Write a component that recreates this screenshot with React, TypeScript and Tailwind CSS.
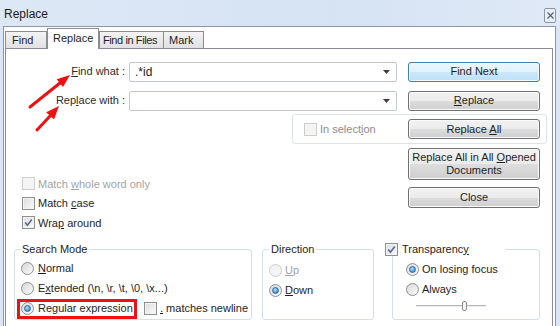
import type { ReactNode } from "react";

function Check({ checked = false, disabled = false }: { checked?: boolean; disabled?: boolean }) {
  return (
    <span
      className={`flex h-[13px] w-[13px] shrink-0 items-center justify-center border ${
        disabled
          ? "border-[#cdcdcd] bg-[#f4f4f4]"
          : "border-[#8e8f8f] bg-[linear-gradient(135deg,#dcdcdc,#fbfbfb)] shadow-[inset_0_0_0_1px_#f3f3f3]"
      }`}
    >
      {checked && (
        <svg width="9" height="9" viewBox="0 0 9 9">
          <path d="M1.2 4.6 L3.4 7.2 L7.8 1.4" fill="none" stroke="#56679a" strokeWidth="1.6" />
        </svg>
      )}
    </span>
  );
}

function Radio({ checked = false, disabled = false }: { checked?: boolean; disabled?: boolean }) {
  return (
    <span
      className={`flex h-[13px] w-[13px] shrink-0 items-center justify-center rounded-full border ${
        disabled
          ? "border-[#cdcdcd] bg-[#f4f4f4]"
          : "border-[#8e8f8f] bg-[linear-gradient(135deg,#d8d8d8,#fbfbfb)]"
      }`}
    >
      {checked && (
        <span className="h-[7px] w-[7px] rounded-full border border-[#2f6ca3] bg-[radial-gradient(circle_at_40%_35%,#b9e2fb,#4b9be0_60%,#2b73b8)]" />
      )}
    </span>
  );
}

function Btn({ children, focused = false, className = "" }: { children: ReactNode; focused?: boolean; className?: string }) {
  return (
    <div
      className={`flex w-[132px] shrink-0 items-center justify-center rounded-[3px] border text-center leading-[13px] ${
        focused
          ? "border-[#3c7fb1] bg-[linear-gradient(#eaf6fd_0%,#e0f2fc_50%,#cbe8fb_50%,#bde1f7_100%)] shadow-[inset_0_0_0_1px_#f4fbff]"
          : "border-[#707070] bg-[linear-gradient(#f2f2f2_0%,#ebebeb_50%,#dddddd_50%,#cfcfcf_100%)] shadow-[inset_0_0_0_1px_#fbfbfb]"
      } ${className}`}
    >
      {children}
    </div>
  );
}

function Combo({ value = "" }: { value?: string }) {
  return (
    <div className="ml-[4px] flex h-[20px] w-[268px] items-center justify-between rounded-[2px] border border-[#c3c8d0] bg-white pl-[5px] pr-[6px] text-[12px] text-[#1e1e1e]">
      <span>{value}</span>
      <svg width="7" height="4" viewBox="0 0 7 4">
        <path d="M0 0 H7 L3.5 4 Z" fill="#3d3d3d" />
      </svg>
    </div>
  );
}

export default function App() {
  return (
    <div className="relative h-[326px] w-[560px] overflow-hidden bg-[#dae6f5] font-['Liberation_Sans',Arial,sans-serif] text-[11px] text-[#1e1e1e]">
      {/* barra de título */}
      <div className="flex h-[26px] items-start justify-between bg-[linear-gradient(90deg,#dde8f6,#d6e3f3_60%,#dfe9f7)] pl-[4px] pr-[4px]">
        <span className="mt-[7px] text-[12px] leading-[14px] text-[#1b1b1b]">Replace</span>
        <div className="mt-[8px] flex h-[15px] w-[12px] items-center justify-center rounded-[2px] border border-[#8a95a5] bg-[#e8eff9]">
          <svg width="7" height="7" viewBox="0 0 7 7">
            <path d="M0.5 0.5 L6.5 6.5 M6.5 0.5 L0.5 6.5" stroke="#5b6470" strokeWidth="1.3" />
          </svg>
        </div>
      </div>

      {/* área do diálogo */}
      <div className="ml-[3px] mr-[4px] h-[300px] border-l border-r border-t border-[#8b96a6] bg-white">
        {/* abas */}
        <div className="flex h-[21px] items-end whitespace-nowrap pl-[1px]">
          <div className="flex h-[17px] w-[42px] items-center border border-b-0 border-[#898c95] bg-[linear-gradient(#f3f3f3,#e1e1e1)] pl-[6px]">Find</div>
          <div className="relative z-10 -mb-px flex h-[21px] w-[52px] items-center border border-b-0 border-[#898c95] bg-white pl-[5px] pb-[1px]">Replace</div>
          <div className="flex h-[17px] w-[65px] items-center overflow-hidden border border-b-0 border-[#898c95] bg-[linear-gradient(#f3f3f3,#e1e1e1)] pl-[3px] tracking-[-0.4px]">Find in Files</div>
          <div className="flex h-[17px] w-[40px] items-center border border-b-0 border-l-0 border-[#898c95] bg-[linear-gradient(#f3f3f3,#e1e1e1)] pl-[5px]">Mark</div>
        </div>

        {/* painel */}
        <div className="ml-[1px] mr-[2px] h-[300px] border border-[#898c95]">
          <div className="mt-[12px] flex h-[21px] items-center">
            <span className="w-[119px] text-right text-[#2b2b2b]">
              <u>F</u>ind what :
            </span>
            <Combo value=".*id" />
            <Btn focused className="ml-[11px] h-[20px]">Find Next</Btn>
          </div>
          <div className="mt-[8px] flex h-[21px] items-center">
            <span className="w-[119px] text-right text-[#2b2b2b]">
              Rep<u>l</u>ace with :
            </span>
            <Combo />
            <Btn className="ml-[11px] h-[20px]">
              <span>
                <u>R</u>eplace
              </span>
            </Btn>
          </div>

          <div className="ml-[286px] mt-[3px] flex h-[30px] w-[255px] items-center rounded-[3px] border border-[#dde3ea] pl-[11px]">
            <div className="flex w-[104px] items-center gap-[3px] text-[#8d8d8d]">
              <Check disabled />
              <span>
                In select<u>i</u>on
              </span>
            </div>
            <Btn className="h-[20px]">
              <span>
                Replace <u>A</u>ll
              </span>
            </Btn>
          </div>

          <div className="mt-[4px] flex">
            <div className="w-[402px] pl-[16px] pt-[26px]">
              <div className="flex h-[19.5px] items-center gap-[3px] text-[#a3a3a3]">
                <Check disabled />
                <span>
                  Match <u>w</u>hole word only
                </span>
              </div>
              <div className="flex h-[19.5px] items-center gap-[3px]">
                <Check />
                <span>
                  Match <u>c</u>ase
                </span>
              </div>
              <div className="flex h-[19.5px] items-center gap-[3px]">
                <Check checked />
                <span>
                  Wra<u>p</u> around
                </span>
              </div>
            </div>
            <div className="flex flex-col gap-[7px]">
              <Btn className="h-[32px]">
                <span>
                  Replace All in All <u>O</u>pened
                  <br />
                  Documents
                </span>
              </Btn>
              <Btn className="h-[21px]">Close</Btn>
            </div>
          </div>

          {/* grupos */}
          <div className="mt-[10px] flex items-stretch">
            <fieldset className="ml-[8px] w-[238px] rounded-[3px] border border-[#d5dfe5] pt-[3px]">
              <legend className="ml-[5px] px-[2px] leading-[13px]">Search Mode</legend>
              <div className="flex h-[20px] items-center gap-[4px] pl-[6px]">
                <Radio />
                <span>
                  <u>N</u>ormal
                </span>
              </div>
              <div className="flex h-[20px] items-center gap-[4px] pl-[6px]">
                <Radio />
                <span>
                  E<u>x</u>tended (\n, \r, \t, \0, \x...)
                </span>
              </div>
              <div className="flex h-[20px] items-center">
                <div className="ml-[2px] flex h-[20px] w-[120px] shrink-0 items-center gap-[4px] border-[3px] border-[#ee1111] pl-[1px]">
                  <Radio checked />
                  <span className="whitespace-nowrap">
                    Re<u>g</u>ular expression
                  </span>
                </div>
                <div className="ml-[7px] flex items-center gap-[3px]">
                  <Check />
                  <span className="whitespace-nowrap">
                    <u>.</u> matches newline
                  </span>
                </div>
              </div>
            </fieldset>

            <fieldset className="ml-[10px] w-[112px] rounded-[3px] border border-[#d5dfe5] pt-[5px]">
              <legend className="ml-[6px] px-[2px] leading-[13px]">Direction</legend>
              <div className="flex h-[20px] items-center gap-[3px] pl-[6px] text-[#a3a3a3]">
                <Radio disabled />
                <span>
                  <u>U</u>p
                </span>
              </div>
              <div className="flex h-[20px] items-center gap-[3px] pl-[6px]">
                <Radio checked />
                <span>
                  <u>D</u>own
                </span>
              </div>
            </fieldset>

            <fieldset className="ml-[18px] w-[148px] rounded-[3px] border border-[#d5dfe5] pt-[4px]">
              <legend className="-ml-[8px] flex w-[120px] items-center gap-[4px] leading-[13px]">
                <Check checked />
                <span>
                  Transparenc<u>y</u>
                </span>
              </legend>
              <div className="flex h-[20px] items-center gap-[3px] pl-[13px]">
                <Radio checked />
                <span>On losing focus</span>
              </div>
              <div className="flex h-[20px] items-center gap-[3px] pl-[13px]">
                <Radio />
                <span>Always</span>
              </div>
              <div className="flex h-[12px] items-center pl-[23px]">
                <svg width="70" height="12" viewBox="0 0 70 12">
                  <line x1="0" y1="5.5" x2="70" y2="5.5" stroke="#b4b4b4" />
                  <line x1="0" y1="6.5" x2="70" y2="6.5" stroke="#efefef" />
                  <rect x="46.5" y="1.5" width="4" height="9" rx="1.5" fill="#f4f4f4" stroke="#8e8f8f" />
                </svg>
              </div>
            </fieldset>
          </div>
        </div>
      </div>

      {/* setas de anotação */}
      <svg className="pointer-events-none absolute inset-0" width="560" height="326">
        <line x1="30" y1="107" x2="60" y2="83" stroke="#ee1111" strokeWidth="3" strokeLinecap="round" />
        <polygon points="70,75 63,87 56.7,79.2" fill="#ee1111" />
        <line x1="37" y1="130" x2="50.5" y2="115.5" stroke="#ee1111" strokeWidth="3" strokeLinecap="round" />
        <polygon points="59,106 54,119.5 46.2,112.3" fill="#ee1111" />
      </svg>
    </div>
  );
}
